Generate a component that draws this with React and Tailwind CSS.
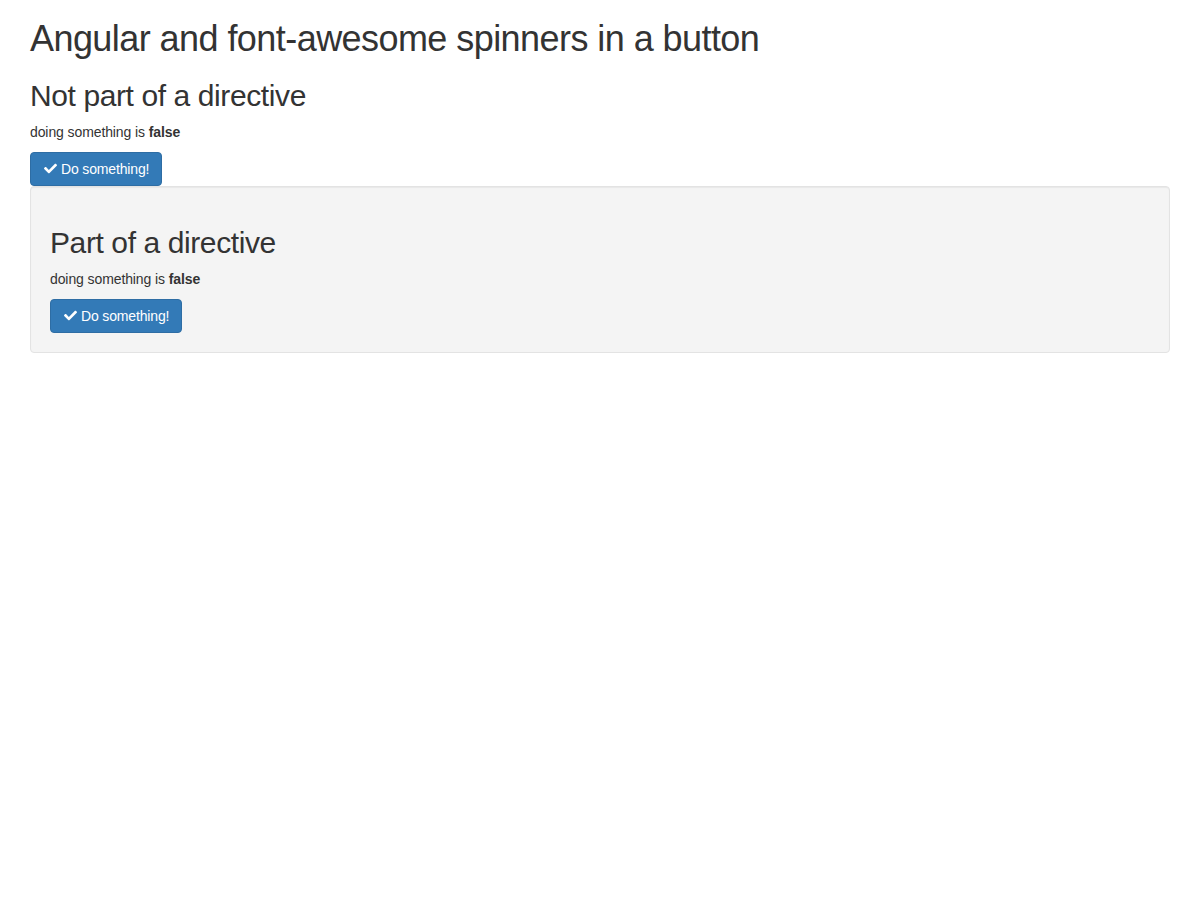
import React, { useState } from "react";
import { FaCheck } from "react-icons/fa";

const DoButton = ({ onClick }) => (
  <button
    type="button"
    onClick={onClick}
    className="inline-flex items-center px-[12px] py-[6px] text-[14px] leading-[20px] tracking-[-0.15px] text-white bg-[#337ab7] border border-[#2e6da4] rounded-[4px] hover:bg-[#286090]"
  >
    <FaCheck className="w-[13px] h-[13px] ml-[1px] mr-[4px]" />
    Do something!
  </button>
);

const Section = ({ title, doing, setDoing }) => (
  <div>
    <h2 className="mt-[20px] mb-[10px] text-[30px] leading-[33px] tracking-[-0.4px] font-normal">
      {title}
    </h2>
    <p className="mb-[10px] text-[14px] leading-[20px] tracking-[-0.1px]">
      doing something is <b>{doing ? "true" : "false"}</b>
    </p>
    <DoButton onClick={() => setDoing(false)} />
  </div>
);

export default function App() {
  const [doingA, setDoingA] = useState(false);
  const [doingB, setDoingB] = useState(false);

  return (
    <div className="px-[30px] text-[#333] font-['Liberation_Sans',Arial,sans-serif] text-[14px]">
      <h1 className="mt-[20px] mb-[10px] text-[36px] leading-[38.5px] tracking-[-0.56px] font-normal">
        Angular and font-awesome spinners in a button
      </h1>
      <Section title="Not part of a directive" doing={doingA} setDoing={setDoingA} />
      <div className="mb-[20px] p-[19px] bg-[#f4f4f4] border border-[#e3e3e3] rounded-[4px] shadow-[inset_0_1px_1px_rgba(0,0,0,0.05)]">
        <Section title="Part of a directive" doing={doingB} setDoing={setDoingB} />
      </div>
    </div>
  );
}
